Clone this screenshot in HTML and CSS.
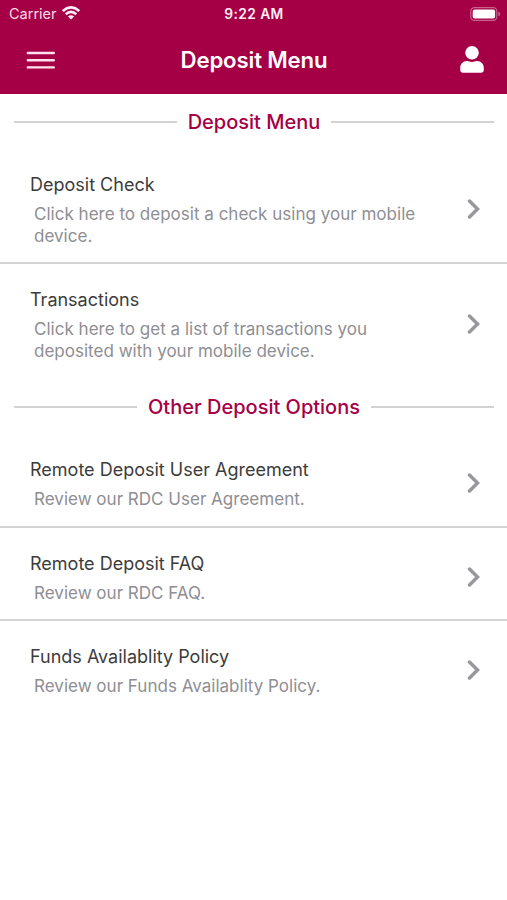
FILE: index.html
```html
<!DOCTYPE html>
<html lang="en">
<head>
<meta charset="utf-8">
<title>Deposit Menu</title>
<link rel="stylesheet" href="styles.css">
</head>
<body>
<header class="header">
  <div class="status">
    <div class="carrier"><span>Carrier</span>
      <svg class="wifi" width="18" height="14" viewBox="0 0 18 14" fill="none" stroke="#ffeef6" stroke-width="2.6"><path d="M.8 5.1Q9-2.400 17.2 5.1"/><path d="M3.7 8.300Q9 3.600 14.3 8.300"/><path d="M9 13.600L5.900 10.500Q9 7.800 12.100 10.500Z" fill="#ffeef6" stroke="none"/></svg>
    </div>
    <span class="time">9:22 AM</span>
    <svg class="battery" width="31" height="14" viewBox="0 0 31 14"><rect x=".8" y=".6" width="26" height="12.8" rx="3.6" fill="none" stroke="#c8638c" stroke-width="1.2"/><rect x="2.7" y="2.4" width="22.4" height="9.2" rx="2" fill="#fff"/><path d="M28.4 4.800Q30.300 5.400 30.300 7T28.400 9.200Z" fill="#c8638c"/></svg>
  </div>
  <nav class="nav">
    <svg class="menu" width="30" height="20" viewBox="0 0 30 20" stroke="#ffe0ee" stroke-width="2.4" stroke-linecap="round"><path d="M2.800 3H28.800M2.800 10.300H28.800M2.800 17.400H28.800"/></svg>
    <h1 class="title">Deposit Menu</h1>
    <svg class="user" width="24" height="27" viewBox="0 0 24 27" fill="#fff"><circle cx="12" cy="6.8" r="6.8"/><path d="M7 15C9 15 9.500 16 12 16S15 15 17 15C21 15 23.800 18 23.800 22V24.300Q23.800 26.700 21.400 26.700H2.600Q.2 26.700 .2 24.300V22C.2 18 3 15 7 15Z"/></svg>
  </nav>
</header>
<main>
  <h2 class="section"><span>Deposit Menu</span></h2>
  <a class="row ruled"><div class="text"><h3 class="name">Deposit Check</h3><p class="desc">Click here to deposit a check using your mobile<br>device.</p></div><svg class="chevron" viewBox="0 0 14 20"><path d="M2.500 2L10.500 10L2.500 18"/></svg></a>
  <a class="row"><div class="text"><h3 class="name">Transactions</h3><p class="desc">Click here to get a list of transactions you<br>deposited with your mobile device.</p></div><svg class="chevron" viewBox="0 0 14 20"><path d="M2.500 2L10.500 10L2.500 18"/></svg></a>
  <h2 class="section other"><span>Other Deposit Options</span></h2>
  <a class="row ruled"><div class="text"><h3 class="name">Remote Deposit User Agreement</h3><p class="desc">Review our RDC User Agreement.</p></div><svg class="chevron" viewBox="0 0 14 20"><path d="M2.500 2L10.500 10L2.500 18"/></svg></a>
  <a class="row ruled"><div class="text"><h3 class="name">Remote Deposit FAQ</h3><p class="desc">Review our RDC FAQ.</p></div><svg class="chevron" viewBox="0 0 14 20"><path d="M2.500 2L10.500 10L2.500 18"/></svg></a>
  <a class="row"><div class="text"><h3 class="name">Funds Availablity Policy</h3><p class="desc">Review our Funds Availablity Policy.</p></div><svg class="chevron" viewBox="0 0 14 20"><path d="M2.500 2L10.500 10L2.500 18"/></svg></a>
</main>
</body>
</html>
```
FILE: styles.css
```css
* { box-sizing: border-box; }
body { margin: 0; background: #fff; font-family: Inter, "Liberation Sans", sans-serif; }
h1, h2, h3, p { margin: 0; }
svg { display: block; }
.header { height: 94px; background: #a50046; color: #fff; }
.status { display: grid; grid-template-columns: 1fr auto 1fr; align-items: center; height: 27px; padding: 0 6px 0 9px; font-size: 14.5px; color: #ffdcea; }
.carrier { display: flex; align-items: center; gap: 5px; }
.wifi { margin-top: -1px; }
.time { font-weight: 600; font-size: 13.8px; letter-spacing: 0.4px; margin-right: 2px; color: #ffeef6; }
.battery { justify-self: end; }
.nav { display: grid; grid-template-columns: 1fr auto 1fr; align-items: center; height: 66px; padding: 0 23px 0 25px; }
.title { font-size: 22.200px; font-weight: 600; letter-spacing: -0.150px; margin: 0 1px 2px 0; }
.user { justify-self: end; margin-bottom: 2px; }
.section { display: flex; align-items: center; gap: 11px; height: 54.500px; padding: 2px 13px 0 14px; color: #a50046; font-size: 20px; font-weight: 480; }
.section::before, .section::after { content: ""; flex: 1; height: 2px; background: #d2d2d2; }
.section.other { padding-top: 0; }
.row { display: flex; align-items: center; justify-content: space-between; padding: 25px 26px 17.500px 30px; }
.ruled { border-bottom: 2px solid #d4d4d4; padding-bottom: 15.500px; }
.name { font-size: 18px; line-height: 22px; font-weight: 400; color: #3c3c3c; }
.desc { margin: 7px 0 0 4px; font-size: 17.050px; line-height: 22px; color: #8e8e93; white-space: nowrap; }
.chevron { width: 14px; height: 20px; margin-top: -3px; fill: none; stroke: #98989c; stroke-width: 3.500; stroke-linecap: round; stroke-linejoin: miter; }
```
